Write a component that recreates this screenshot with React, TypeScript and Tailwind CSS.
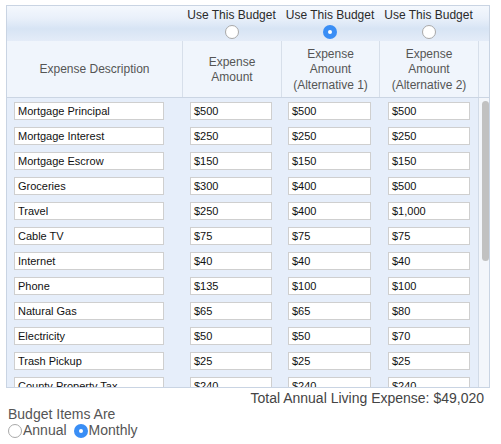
const rows: Array<[string, string, string, string]> = [
  ['Mortgage Principal', '$500', '$500', '$500'],
  ['Mortgage Interest', '$250', '$250', '$250'],
  ['Mortgage Escrow', '$150', '$150', '$150'],
  ['Groceries', '$300', '$400', '$500'],
  ['Travel', '$250', '$400', '$1,000'],
  ['Cable TV', '$75', '$75', '$75'],
  ['Internet', '$40', '$40', '$40'],
  ['Phone', '$135', '$100', '$100'],
  ['Natural Gas', '$65', '$65', '$80'],
  ['Electricity', '$50', '$50', '$70'],
  ['Trash Pickup', '$25', '$25', '$25'],
  ['County Property Tax', '$240', '$240', '$240'],
];

const cols = 'grid grid-cols-[175px_99px_98px_99px_13px]';

function Radio({ checked }: { checked?: boolean }) {
  return checked ? (
    <span className="flex h-[14px] w-[14px] items-center justify-center rounded-full bg-[#3a8ef5]">
      <span className="h-[4px] w-[4px] rounded-full bg-white" />
    </span>
  ) : (
    <span className="block h-[14px] w-[14px] rounded-full border border-[#a9a9a9] bg-white" />
  );
}

function Field({ value, width }: { value: string; width: string }) {
  return (
    <div className={`flex h-[18px] ${width} items-center border border-[#cfcfcf] bg-white pl-[3px] text-[11px] text-[#111]`}>
      {value}
    </div>
  );
}

export default function App() {
  return (
    <div className="min-h-[444px] bg-white pl-[6px] pt-[5px] font-['Liberation_Sans',Arial,sans-serif]">
      <div className="w-[484px] border border-[#c9d4e3]">
        <div className={`${cols} h-[35px] bg-[linear-gradient(#f4f8fd_0%,#e9f0fa_35%,#d7e4f4_65%,#e4ecf8_100%)]`}>
          <div />
          {[false, true, false].map((on, i) => (
            <div key={i} className="flex flex-col items-center pt-[2px]">
              <span className="text-[12px] leading-[14px] text-[#2a2a2a]">Use This Budget</span>
              <span className="mt-[3px]">
                <Radio checked={on} />
              </span>
            </div>
          ))}
          <div />
        </div>
        <div className={`${cols} h-[57px] border-b border-[#cbd5e3] bg-[#f0f5fc] text-center text-[12px] leading-[15.5px] text-[#555]`}>
          <div className="flex items-center justify-center pt-[2px]">Expense Description</div>
          <div className="flex items-center justify-center border-l border-[#d7dfea] pt-[2px]">
            Expense
            <br />
            Amount
          </div>
          <div className="flex items-center justify-center border-l border-[#d7dfea] pt-[2px]">
            Expense
            <br />
            Amount
            <br />
            (Alternative 1)
          </div>
          <div className="flex items-center justify-center border-l border-[#d7dfea] pt-[2px]">
            Expense
            <br />
            Amount
            <br />
            (Alternative 2)
          </div>
          <div className="border-l border-[#d7dfea]" />
        </div>
        <div className={`${cols} h-[289px] overflow-hidden bg-[#e6eefa]`}>
          <div className="col-span-4 flex flex-col gap-[7px] pt-[4px]">
            {rows.map(([name, a, b, c]) => (
              <div key={name} className={`${cols} shrink-0`}>
                <div className="pl-[7px]">
                  <Field value={name} width="w-[150px]" />
                </div>
                <div className="pl-[8px]">
                  <Field value={a} width="w-[82px]" />
                </div>
                <div className="pl-[7px]">
                  <Field value={b} width="w-[83px]" />
                </div>
                <div className="pl-[9px]">
                  <Field value={c} width="w-[82px]" />
                </div>
              </div>
            ))}
          </div>
          <div className="border-l border-[#d2dbe7] bg-[#f3f6fb] pl-[3px] pt-[3px]">
            <div className="h-[160px] w-[7px] rounded-full bg-[#c1c1c1]" />
          </div>
        </div>
      </div>
      <div className="w-[478px] pt-[2px] text-right text-[14px] leading-[16px] text-[#444]">
        Total Annual Living Expense: $49,020
      </div>
      <div className="pl-[2px] text-[14px] leading-[16px] text-[#555]">
        <div>Budget Items Are</div>
        <div className="flex items-center">
          <span className="mr-[1px] mt-[1px]">
            <Radio />
          </span>
          <span>Annual</span>
          <span className="ml-[7px] mr-[1px] mt-[1px]">
            <Radio checked />
          </span>
          <span>Monthly</span>
        </div>
      </div>
    </div>
  );
}
